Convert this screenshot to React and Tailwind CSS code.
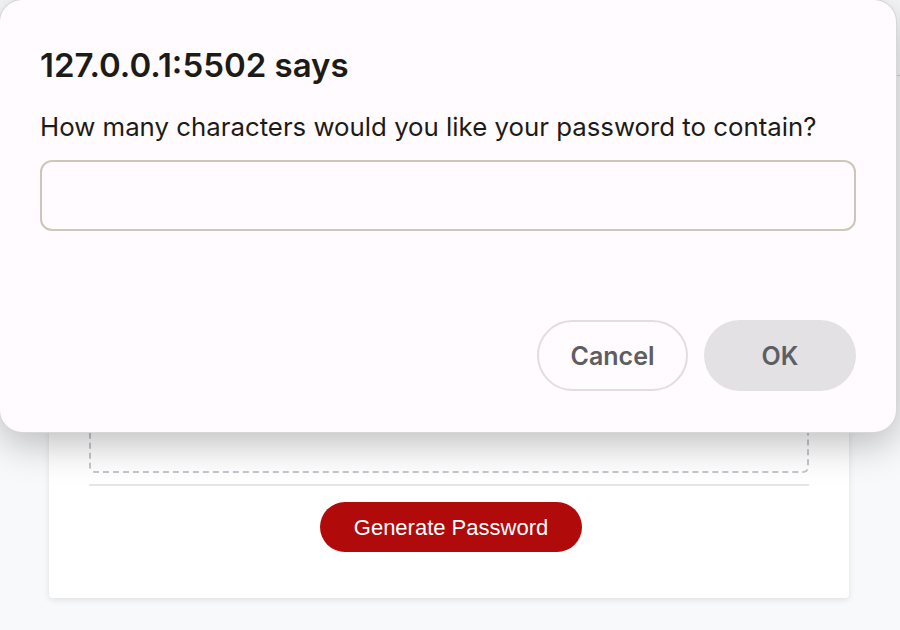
export default function App() {
  return (
    <div className="relative h-[630px] w-full overflow-hidden bg-[#f8f9fa]" style={{ fontFamily: "Inter, 'Noto Sans', sans-serif" }}>
      {/* page behind the prompt */}
      <div className="h-[76px] border-b border-[#d4d4d4]"></div>
      <div className="ml-[49px] mt-[24px] w-[800px] rounded-[4px] bg-white px-[40px] pt-[40px] pb-[46px] shadow-[0_2px_6px_rgba(0,0,0,0.1)]">
        <div className="h-[333px] rounded-[6px] border-2 border-dashed border-[#c3c8cf]"></div>
        <div className="mt-[11px] h-[2px] bg-[#e6e6e6]"></div>
        <div className="mt-[16px] flex justify-center pl-[4px]">
          <button
            className="h-[50px] w-[262px] rounded-full bg-[#b00a0a] text-[22px] text-white"
            style={{ fontFamily: "'Liberation Sans', Arial, sans-serif" }}
          >
            Generate Password
          </button>
        </div>
      </div>

      {/* prompt dialog */}
      <div className="absolute left-0 top-0 flex h-[432px] w-[896px] flex-col rounded-[22px] bg-[#fffbfe] px-[40px] shadow-[0_10px_40px_rgba(0,0,0,0.28)] ring-1 ring-[#d8d6d8]">
        <div className="mt-[46px] text-[33px] font-semibold leading-[38px] text-[#1d1b16]">127.0.0.1:5502 says</div>
        <div className="mt-[28px] text-[25.8px] leading-[30px] text-[#1d1b16]">How many characters would you like your password to contain?</div>
        <div className="mt-[18px] h-[71px] w-[816px] rounded-[12px] border-2 border-[#ccc7b9]"></div>
        <div className="mt-[89px] flex justify-end gap-[16px]">
          <button className="h-[71px] w-[151px] rounded-full border-2 border-[#e2dedf] pt-[3px] text-[25px] font-semibold text-[#5d5e62]">Cancel</button>
          <button className="h-[71px] w-[152px] rounded-full bg-[#e3e1e3] pt-[3px] text-[25px] font-semibold text-[#5d5e62]">OK</button>
        </div>
      </div>
    </div>
  )
}
